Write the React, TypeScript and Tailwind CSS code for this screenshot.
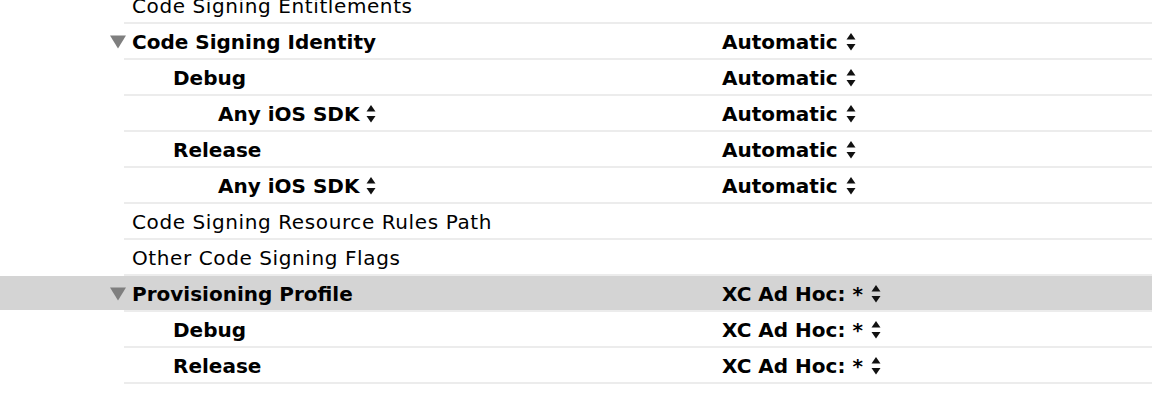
import React from "react";

type Row = {
  name: string;
  level: number;
  bold?: boolean;
  expandable?: boolean;
  selected?: boolean;
  nameStepper?: boolean;
  value?: string;
};

const rows: Row[] = [
  { name: "Code Signing Entitlements", level: 0 },
  { name: "Code Signing Identity", level: 0, bold: true, expandable: true, value: "Automatic" },
  { name: "Debug", level: 1, bold: true, value: "Automatic" },
  { name: "Any iOS SDK", level: 2, bold: true, nameStepper: true, value: "Automatic" },
  { name: "Release", level: 1, bold: true, value: "Automatic" },
  { name: "Any iOS SDK", level: 2, bold: true, nameStepper: true, value: "Automatic" },
  { name: "Code Signing Resource Rules Path", level: 0 },
  { name: "Other Code Signing Flags", level: 0 },
  { name: "Provisioning Profile", level: 0, bold: true, expandable: true, selected: true, value: "XC Ad Hoc: *" },
  { name: "Debug", level: 1, bold: true, value: "XC Ad Hoc: *" },
  { name: "Release", level: 1, bold: true, value: "XC Ad Hoc: *" },
];

function Stepper() {
  return (
    <svg width="10" height="20" viewBox="0 0 10 20" className="shrink-0">
      <polygon points="5,1 9.5,7.5 0.5,7.5" fill="#111" />
      <polygon points="0.5,12 9.5,12 5,18.5" fill="#111" />
    </svg>
  );
}

function Disclosure() {
  return (
    <svg width="16" height="14" viewBox="0 0 16 14">
      <polygon points="0,0.5 16,0.5 8,13.5" fill="#7f7f7f" />
    </svg>
  );
}

const padClass = ["pl-[8px]", "pl-[49px]", "pl-[94px]"];

export default function App() {
  return (
    <div
      className="w-[1152px] h-[420px] overflow-hidden bg-white text-black"
      style={{ fontFamily: '"DejaVu Sans", "Liberation Sans", sans-serif' }}
    >
      <div className="-mt-[12px] flex flex-col">
        {rows.map((r, i) => (
          <div key={i} className="flex flex-col">
            <div className={`flex h-[34px] items-center pt-[1px] ${r.selected ? "bg-[#d4d4d4]" : ""}`}>
              <div className="w-[124px] shrink-0 flex items-center justify-end">
                {r.expandable ? (
                  <div className="mr-[-2px]">
                    <Disclosure />
                  </div>
                ) : null}
              </div>
              <div
                className={`w-[598px] shrink-0 flex items-center gap-[7px] ${padClass[r.level]} text-[20px] ${
                  r.bold ? "font-bold tracking-[0px]" : "font-normal tracking-[0.6px]"
                }`}
              >
                <span>{r.name}</span>
                {r.nameStepper ? <Stepper /> : null}
              </div>
              {r.value ? (
                <div className="flex items-center gap-[8px] text-[20px] font-bold">
                  <span>{r.value}</span>
                  <Stepper />
                </div>
              ) : null}
            </div>
            <div className="ml-[124px] h-[2px] bg-[#ececec]" />
          </div>
        ))}
      </div>
    </div>
  );
}
